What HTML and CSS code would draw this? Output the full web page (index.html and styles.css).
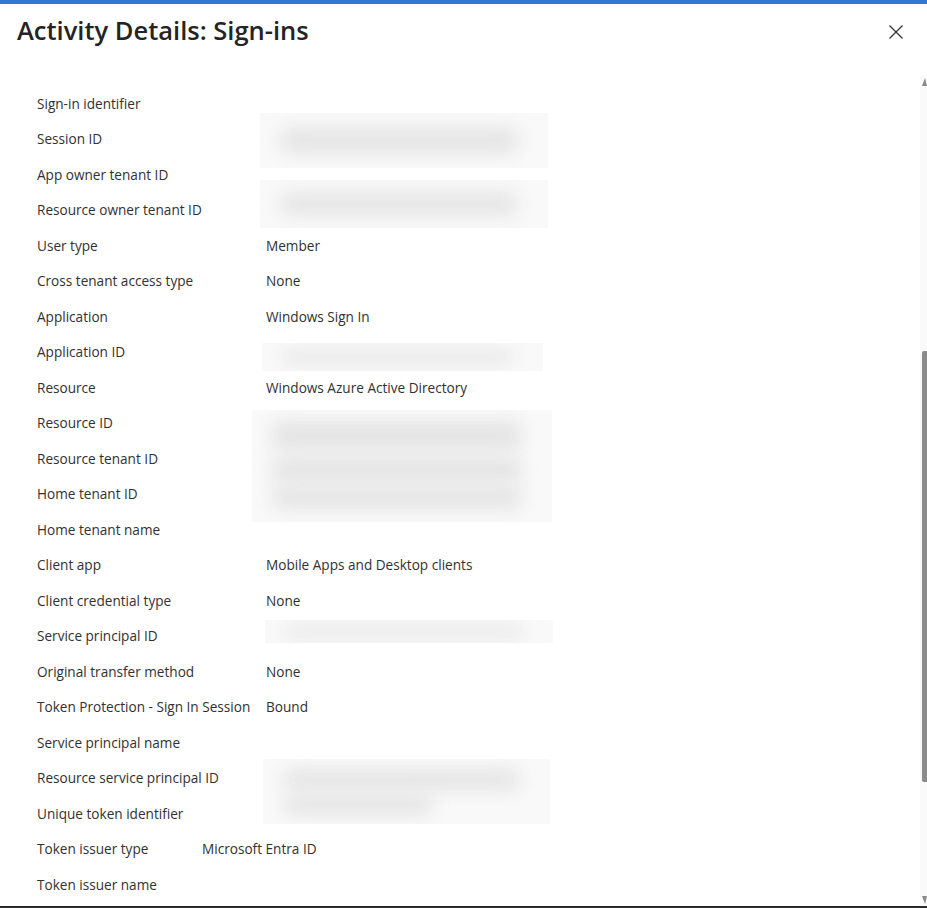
FILE: index.html
```html
<!DOCTYPE html>
<html lang="en">
<head>
<meta charset="utf-8">
<title>Activity Details: Sign-ins</title>
<link rel="stylesheet" href="styles.css">
</head>
<body>
<div class="topbar"></div>
<header class="header">
  <h1 class="title">Activity Details: Sign-ins</h1>
  <button class="close" aria-label="Close">
    <svg width="14" height="14" viewBox="0 0 14 14"><path d="M0.5 0.5 L13.5 13.5 M13.5 0.5 L0.5 13.5" stroke="#323130" stroke-width="1.2" fill="none"/></svg>
  </button>
</header>
<main class="panel">
  <div class="content">
    <dl class="details">
      <dt>Sign-in identifier</dt><dd></dd>
      <dt>Session ID</dt><dd></dd>
      <dt>App owner tenant ID</dt><dd></dd>
      <dt>Resource owner tenant ID</dt><dd></dd>
      <dt>User type</dt><dd>Member</dd>
      <dt>Cross tenant access type</dt><dd>None</dd>
      <dt>Application</dt><dd>Windows Sign In</dd>
      <dt>Application ID</dt><dd></dd>
      <dt>Resource</dt><dd>Windows Azure Active Directory</dd>
      <dt>Resource ID</dt><dd></dd>
      <dt>Resource tenant ID</dt><dd></dd>
      <dt>Home tenant ID</dt><dd></dd>
      <dt>Home tenant name</dt><dd></dd>
      <dt>Client app</dt><dd>Mobile Apps and Desktop clients</dd>
      <dt>Client credential type</dt><dd>None</dd>
      <dt>Service principal ID</dt><dd></dd>
      <dt>Original transfer method</dt><dd>None</dd>
      <dt>Token Protection - Sign In Session</dt><dd>Bound</dd>
      <dt>Service principal name</dt><dd></dd>
      <dt>Resource service principal ID</dt><dd></dd>
      <dt>Unique token identifier</dt><dd></dd>
    </dl>
    <dl class="details details--issuer">
      <dt>Token issuer type</dt><dd>Microsoft Entra ID</dd>
      <dt>Token issuer name</dt><dd></dd>
    </dl>

    <div class="redact r1"><span class="s s-a"></span></div>
    <div class="redact r2"><span class="s s-a"></span></div>
    <div class="redact r3"><span class="s s-a"></span></div>
    <div class="redact r4"><span class="s s-a"></span><span class="s s-b"></span><span class="s s-c"></span></div>
    <div class="redact r5"><span class="s s-a"></span></div>
    <div class="redact r6"><span class="s s-a"></span><span class="s s-d"></span></div>
  </div>
  <div class="scrollbar">
    <span class="arrow arrow--up"></span>
    <div class="track"><div class="thumb"></div></div>
    <span class="arrow arrow--down"></span>
  </div>
</main>
</body>
</html>
```

FILE: styles.css
```css
* { box-sizing: border-box; }
html, body {
  margin: 0;
  padding: 0;
  background: #ffffff;
  height: 908px;
  overflow: hidden;
}
body {
  font-family: "Open Sans", "Noto Sans", "Liberation Sans", sans-serif;
  color: #323130;
  display: flex;
  flex-direction: column;
}
.topbar {
  height: 4px;
  background: #3277d1;
  flex: none;
}
.header {
  flex: none;
  height: 71px;
  display: flex;
  align-items: flex-start;
  justify-content: space-between;
  padding: 11px 24px 0 17px;
}
.title {
  margin: 0;
  font-size: 25.5px;
  font-weight: 600;
  line-height: 31px;
  color: #252423;
}
.close {
  border: none;
  background: none;
  padding: 0;
  margin-top: 10px;
  width: 14px;
  height: 14px;
  display: flex;
}
.panel {
  flex: 1;
  display: flex;
  border-bottom: 2px solid #2b2b2b;
  min-height: 0;
}
.content {
  flex: 1;
  position: relative;
  padding: 11px 0 0 37px;
}
.details {
  margin: 0;
  display: grid;
  grid-template-columns: 229px 1fr;
  grid-auto-rows: 35.5px;
  align-items: center;
  font-size: 13.6px;
  line-height: 18px;
}
.details dt, .details dd { margin: 0; white-space: nowrap; }
.details--issuer { grid-template-columns: 165px 1fr; }

.redact {
  position: absolute;
  overflow: hidden;
  background: #f9f9f9;
}
.redact .s {
  position: absolute;
  display: block;
  background: #e4e4e4;
  filter: blur(9px);
  border-radius: 10px;
}
.redact .s-a { left: 20px; right: 30px; top: 28%; height: 44%; }
.r1 { left: 260px; top: 38px; width: 288px; height: 55px; }
.r2 { left: 260px; top: 105px; width: 288px; height: 48px; }
.r3 { left: 262px; top: 268px; width: 281px; height: 28px; }
.r4 { left: 252px; top: 335px; width: 300px; height: 112px; }
.r4 .s-a { top: 10%; height: 26%; }
.r4 .s-b { left: 20px; right: 30px; top: 42%; height: 22%; }
.r4 .s-c { left: 20px; right: 30px; top: 68%; height: 20%; }
.r5 { left: 265px; top: 545px; width: 288px; height: 23px; }
.r6 { left: 263px; top: 684px; width: 287px; height: 65px; }
.r6 .s-a { top: 15%; height: 32%; }
.r6 .s-d { left: 20px; width: 150px; top: 56%; height: 30%; }

.scrollbar {
  flex: none;
  width: 7px;
  background: #fafafa;
  display: flex;
  flex-direction: column;
  align-items: flex-end;
  padding: 3px 0 2px;
}
.arrow {
  flex: none;
  width: 0;
  height: 0;
  border-left: 3px solid transparent;
  border-right: 2px solid transparent;
}
.arrow--up { border-bottom: 8px solid #8a8a8a; margin-bottom: 3px; }
.arrow--down { border-top: 8px solid #8a8a8a; margin-top: 3px; }
.track {
  flex: 1;
  width: 5px;
  padding-top: 262px;
}
.thumb {
  width: 5px;
  height: 431px;
  background: #8b8b8b;
  border-radius: 2px 0 0 2px;
}
```
